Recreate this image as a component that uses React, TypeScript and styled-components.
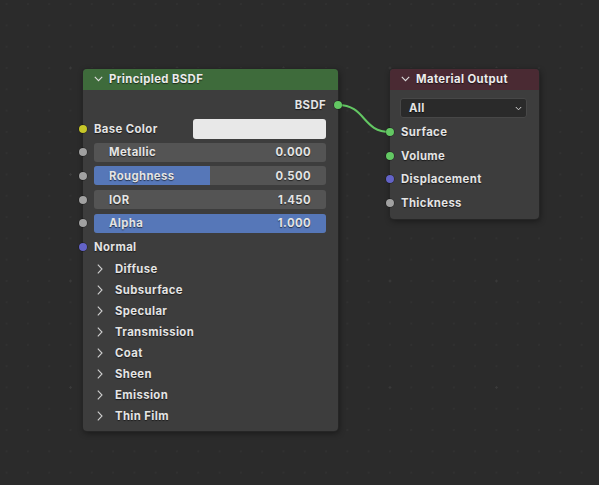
import React from "react";
import styled, { createGlobalStyle } from "styled-components";

const GlobalStyle = createGlobalStyle`
  html, body {
    margin: 0;
    padding: 0;
    background: #2b2b2b;
  }
  body {
    font-family: Inter, "Noto Sans", "DejaVu Sans", sans-serif;
  }
`;

const Canvas = styled.div`
  position: relative;
  width: 599px;
  height: 485px;
  overflow: hidden;
  background-color: #2b2b2b;
  background-image:
    radial-gradient(circle, #3a3a3a 0.9px, transparent 1.4px),
    radial-gradient(circle, #323232 0.6px, transparent 1.1px);
  background-size: 106.5px 106.5px, 21.3px 21.3px;
  background-position: 17.25px 14.75px, 17.25px 14.75px;
`;

const Node = styled.div<{ $left: number; $top: number; $width: number }>`
  position: absolute;
  left: ${(p) => p.$left}px;
  top: ${(p) => p.$top}px;
  width: ${(p) => p.$width}px;
  background: #3d3d3d;
  border-radius: 4px;
  box-shadow: 0 0 0 1px #262626, 1px 2px 6px rgba(0, 0, 0, 0.45);
  color: #e4e4e4;
  font-size: 11.3px;
  font-weight: 700;
  letter-spacing: 0.4px;
  text-shadow: 0 1px 1px rgba(0, 0, 0, 0.6);
`;

const Header = styled.div<{ $color: string }>`
  display: flex;
  align-items: center;
  gap: 6px;
  height: 20px;
  padding: 0 0 1px 11px;
  background: ${(p) => p.$color};
  border-radius: 4px 4px 0 0;
  color: #ececec;
`;

const Body = styled.div<{ $top: number; $bottom: number }>`
  display: flex;
  flex-direction: column;
  padding: ${(p) => p.$top}px 0 ${(p) => p.$bottom}px;
`;

const Row = styled.div<{ $align?: "start" | "end"; $h?: number }>`
  position: relative;
  display: flex;
  align-items: center;
  justify-content: ${(p) => (p.$align === "end" ? "flex-end" : "flex-start")};
  height: ${(p) => p.$h ?? 23.67}px;
  padding: 0 12px 0 11px;
`;

const Socket = styled.span<{ $color: string; $side: "left" | "right" }>`
  position: absolute;
  top: 50%;
  ${(p) => p.$side}: -4px;
  width: 8px;
  height: 8px;
  margin-top: -4px;
  border-radius: 50%;
  background: ${(p) => p.$color};
  box-shadow: 0 0 0 0.5px rgba(0, 0, 0, 0.5);
`;

const Label = styled.span`
  flex: 1;
  white-space: nowrap;
`;

const Swatch = styled.div`
  width: 133px;
  height: 20px;
  border-radius: 3px;
  background: #e8e8e8;
`;

const Slider = styled.div`
  position: relative;
  flex: 1;
  display: flex;
  align-items: center;
  justify-content: space-between;
  height: 19px;
  padding: 0 15px;
  border-radius: 3px;
  background: #545454;
  overflow: hidden;
`;

const SliderFill = styled.div`
  position: absolute;
  left: 0;
  top: 0;
  bottom: 0;
  background: #5677b8;
`;

const SliderText = styled.span`
  position: relative;
`;

const PanelRow = styled.div`
  display: flex;
  align-items: center;
  gap: 12px;
  height: 21px;
  padding-left: 14px;
`;

const Select = styled.div`
  flex: 1;
  display: flex;
  align-items: center;
  justify-content: space-between;
  height: 20px;
  margin-left: -1px;
  padding: 0 4px 0 8px;
  background: #2a2a2a;
  border: 1px solid #474747;
  border-radius: 3px;
  box-sizing: border-box;
`;

const Wire = styled.svg`
  position: absolute;
  left: 0;
  top: 0;
  pointer-events: none;
`;

const ChevronDown = () => (
  <svg width="9" height="6" viewBox="0 0 9 6" fill="none">
    <path d="M0.8 0.8 L4.5 4.6 L8.2 0.8" stroke="#dcdcdc" strokeWidth="1.1" />
  </svg>
);

const SmallChevronDown = () => (
  <svg width="7" height="5" viewBox="0 0 7 5" fill="none">
    <path d="M0.8 1 L3.5 3.8 L6.2 1" stroke="#d0d0d0" strokeWidth="1" />
  </svg>
);

const ChevronRight = () => (
  <svg width="6" height="10" viewBox="0 0 6 10" fill="none">
    <path d="M0.8 0.6 L5 5 L0.8 9.4" stroke="#cfcfcf" strokeWidth="1.1" />
  </svg>
);

const GRAY = "#a1a1a1";
const GREEN = "#63c763";
const YELLOW = "#c7c729";
const PURPLE = "#6363c7";

const sliders = [
  { name: "Metallic", value: "0.000", fill: 0 },
  { name: "Roughness", value: "0.500", fill: 0.5 },
  { name: "IOR", value: "1.450", fill: 0 },
  { name: "Alpha", value: "1.000", fill: 1 },
];

const panels = [
  "Diffuse",
  "Subsurface",
  "Specular",
  "Transmission",
  "Coat",
  "Sheen",
  "Emission",
  "Thin Film",
];

const outputs = [
  { name: "Surface", color: GREEN },
  { name: "Volume", color: GREEN },
  { name: "Displacement", color: PURPLE },
  { name: "Thickness", color: GRAY },
];

export default function App() {
  return (
    <>
      <GlobalStyle />
      <Canvas>
        <Wire width="599" height="485">
          <path
            d="M338 105 C 366 105, 362 132, 390 132"
            stroke="#63c763"
            strokeWidth="2"
            fill="none"
          />
        </Wire>

        <Node $left={83} $top={69} $width={255}>
          <Header $color="#3e6b3b">
            <ChevronDown />
            Principled BSDF
          </Header>
          <Body $top={3.2} $bottom={4}>
            <Row $align="end">
              <span>BSDF</span>
              <Socket $color={GREEN} $side="right" />
            </Row>
            <Row>
              <Socket $color={YELLOW} $side="left" />
              <Label>Base Color</Label>
              <Swatch />
            </Row>
            {sliders.map((s) => (
              <Row key={s.name}>
                <Socket $color={GRAY} $side="left" />
                <Slider>
                  <SliderFill style={{ width: `${s.fill * 100}%` }} />
                  <SliderText>{s.name}</SliderText>
                  <SliderText>{s.value}</SliderText>
                </Slider>
              </Row>
            ))}
            <Row>
              <Socket $color={PURPLE} $side="left" />
              <Label>Normal</Label>
            </Row>
            {panels.map((p) => (
              <PanelRow key={p}>
                <ChevronRight />
                {p}
              </PanelRow>
            ))}
          </Body>
        </Node>

        <Node $left={390} $top={69} $width={149}>
          <Header $color="#4a2a33">
            <ChevronDown />
            Material Output
          </Header>
          <Body $top={6.5} $bottom={4}>
            <Row>
              <Select>
                All
                <SmallChevronDown />
              </Select>
            </Row>
            {outputs.map((o) => (
              <Row key={o.name}>
                <Socket $color={o.color} $side="left" />
                <Label>{o.name}</Label>
              </Row>
            ))}
          </Body>
        </Node>
      </Canvas>
    </>
  );
}
